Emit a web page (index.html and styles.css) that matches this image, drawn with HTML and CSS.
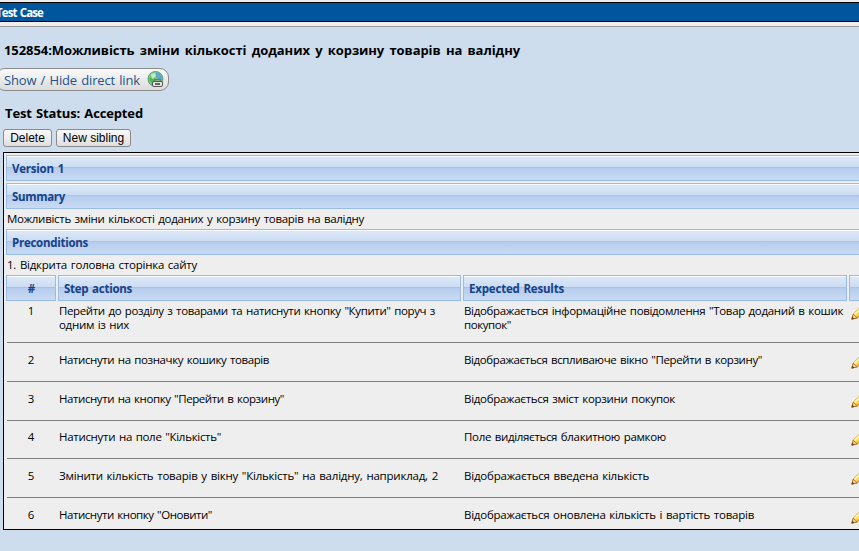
FILE: index.html
```
<!DOCTYPE html>
<html lang="uk">
<head>
<meta charset="utf-8">
<title>Test Case</title>
<link rel="stylesheet" href="styles.css">
</head>
<body>
<svg class="defs" width="0" height="0">
  <symbol id="pencil" viewBox="0 0 16 16">
    <path d="M1 14l1.500-5L10 1.500l4 4L6 13z" fill="#f9d64b" stroke="#b77b16"/>
    <path d="M3.500 9.500L10.500 2.500" stroke="#fff5b0" stroke-width="2"/>
    <path d="M6 12.500L13.500 5" stroke="#d99a20"/>
    <path d="M.8 14.200l1.400-5 4 3.600z" fill="#f0cfae" stroke="#a66a20" stroke-width=".8"/>
    <path d="M.5 14.500l.7-2.800 2.200 2z" fill="#6b3d12"/>
  </symbol>
</svg>
<header class="titlebar"><span class="fit t-bar">Test Case</span></header>
<main>
  <h1><span class="fit t-title">152854:Можливість зміни кількості доданих у корзину товарів на валідну</span></h1>
  <a class="direct-link"><span class="fit t-link">Show / Hide direct link</span>
    <svg width="17" height="17" viewBox="0 0 17 17">
      <circle cx="8.500" cy="8" r="7.500" fill="#77cf7c" stroke="#5b9f78"/>
      <path d="M9 1c4 1 7 4 6.500 8l-4-1-3-3z" fill="#5ba9cf"/>
      <path d="M2 7c2-1 4 0 5 2l-1 4c-2-1-4-3-4-6z" fill="#4dbb52"/>
      <path d="M4 3l4-1 1 3-4 3z" fill="#c0edbc"/>
      <path d="M7.500 11V8.500h6V11" fill="none" stroke="#777" stroke-width="1.400"/>
      <rect x="5.500" y="10.500" width="10" height="5" rx="1.500" fill="#e6e6e6" stroke="#555"/>
      <path d="M8 13h5" stroke="#444" stroke-width="1.600"/>
    </svg>
  </a>
  <h2><span class="fit t-status">Test Status: Accepted</span></h2>
  <div class="buttons"><button class="b-delete">Delete</button><button class="b-sibling">New sibling</button></div>
  <section class="panel">
    <div class="bar first"><span class="fit t-version">Version 1</span></div>
    <div class="bar"><span class="fit t-summary">Summary</span></div>
    <p><span class="fit t-desc">Можливість зміни кількості доданих у корзину товарів на валідну</span></p>
    <div class="bar tight"><span class="fit t-pre">Preconditions</span></div>
    <p><span class="fit t-open">1. Відкрита головна сторінка сайту</span></p>
    <div class="grid head">
      <div class="bar num">#</div><div class="bar"><span class="fit t-steps">Step actions</span></div><div class="bar"><span class="fit t-exp">Expected Results</span></div><div class="bar"></div>
    </div>
    <div class="grid row r1"><div class="n">1</div><div><span class="fit s1">Перейти до розділу з товарами та натиснути кнопку "Купити" поруч з</span><br><span class="fit s1b">одним із них</span></div><div><span class="fit e1">Відображається інформаційне повідомлення "Товар доданий в кошик</span><br><span class="fit e1b">покупок"</span></div><svg class="edit"><use href="#pencil"/></svg></div>
    <div class="grid row"><div class="n">2</div><div><span class="fit s2">Натиснути на позначку кошику товарів</span></div><div><span class="fit e2">Відображається вспливаюче вікно "Перейти в корзину"</span></div><svg class="edit"><use href="#pencil"/></svg></div>
    <div class="grid row"><div class="n">3</div><div><span class="fit s3">Натиснути на кнопку "Перейти в корзину"</span></div><div><span class="fit e3">Відображається зміст корзини покупок</span></div><svg class="edit"><use href="#pencil"/></svg></div>
    <div class="grid row r4"><div class="n">4</div><div><span class="fit s4">Натиснути на поле "Кількість"</span></div><div><span class="fit e4">Поле виділяється блакитною рамкою</span></div><svg class="edit"><use href="#pencil"/></svg></div>
    <div class="grid row"><div class="n">5</div><div><span class="fit s5">Змінити кількість товарів у вікну "Кількість" на валідну, наприклад, 2</span></div><div><span class="fit e5">Відображається введена кількість</span></div><svg class="edit"><use href="#pencil"/></svg></div>
    <div class="grid row r6"><div class="n">6</div><div><span class="fit s6">Натиснути кнопку "Оновити"</span></div><div><span class="fit e6">Відображається оновлена кількість і вартість товарів</span></div><svg class="edit"><use href="#pencil"/></svg></div>
  </section>
</main>
<script src="fit.js"></script>
</body>
</html>
```
FILE: styles.css
```
* { box-sizing: border-box; }
html, body { margin: 0; height: 100%; overflow: hidden; }
body {
  background: #cddded;
  color: #000;
  font: 11.5px/14px "Trebuchet MS", "Open Sans", "Noto Sans", sans-serif;
}
.defs { display: block; height: 0; }
.fit { display: inline-block; white-space: nowrap; width: var(--w); word-spacing: 1px; }
h1, h2, p { margin: 0; }

.titlebar {
  height: 27px;
  border-top: 2px solid #eee;
  border-bottom: 1px solid #999;
  background: linear-gradient(#000 1px, #00569c 1px, #00569c 19px, #000 19px, #000 20px, #eee 20px);
  color: #fff;
  font-weight: bold;
  line-height: 21px;
}
.t-bar { --w: 47px; margin-left: -4px; }
main { padding-left: 3px; }
h1 { margin-top: 14px; padding-left: 1px; height: 20px; font-size: 13px; line-height: 19px; }
.t-title { --w: 516px; word-spacing: 2px; }
.direct-link {
  display: flex;
  align-items: center;
  width: 173px;
  height: 23px;
  margin: 7px 0 0 -7px;
  padding: 0 4px 0 7px;
  justify-content: space-between;
  border: 1px solid #8b8b8b;
  border-radius: 9px;
  background: linear-gradient(#fafafa, #dcdcdc);
  color: #1d5490;
  font-size: 13px;
}
.t-link { --w: 136px; }
h2 { margin-top: 13px; padding-left: 2px; height: 20px; font-size: 13px; line-height: 19px; }
.t-status { --w: 138px; }
.buttons { display: flex; gap: 4px; margin-top: 5px; }
button {
  height: 18px;
  padding: 0;
  border: 1px solid #8b8b8b;
  border-radius: 3px;
  background: linear-gradient(#fafafa, #dedede);
  color: #000;
  font: 12px/15px "Liberation Sans", Arial, sans-serif;
}
.b-delete { width: 49px; }
.b-sibling { width: 75px; }

.panel {
  width: 880px;
  height: 378px;
  margin-top: 5px;
  padding: 2px;
  border: 1px solid #000;
  background: #eee;
  overflow: hidden;
}
.bar {
  height: 26px;
  margin-top: 2px;
  padding-left: 5px;
  border: 1px solid #99bbe8;
  background: linear-gradient(#f8fbff 1px, #dbe8f7 1px, #cbdcf3 11px, #a6c3ea 11px, #a6c3ea 12px, #b6ccec 12px, #c9dbf3);
  color: #15428b;
  font-weight: bold;
  line-height: 26px;
}
.bar.first { margin-top: 0; }
.bar.tight { margin-top: 0; }
p { height: 20px; padding: 3px 0 0 1px; }
.t-version { --w: 52px; }
.t-summary { --w: 53px; }
.t-pre { --w: 76px; }
.t-desc { --w: 357px; }
.t-open { --w: 190px; }
.t-steps { --w: 68px; }
.t-exp { --w: 95px; }

.grid { display: grid; grid-template-columns: 50px 403px 384px 30px; column-gap: 2px; }
.head .bar { margin-top: 0; }
.head .num { padding: 0 0 0 1px; text-align: center; }
.row { height: 39px; padding-top: 10px; margin-left: 1px; border-bottom: 1px solid #7f7f7f; }
.row .n { padding-right: 2px; text-align: center; }
.r1 { height: 42px; padding-top: 3px; }
.r4 { height: 38px; padding-top: 9px; }
.r6 { height: 38px; border: 0; }
.edit { width: 16px; height: 16px; margin: 1px 0 0 1px; }
.s1 { --w: 376px; }
.s1b { --w: 70px; }
.s2 { --w: 210px; }
.s3 { --w: 225px; }
.s4 { --w: 162px; }
.s5 { --w: 379px; }
.s6 { --w: 153px; }
.e1 { --w: 379px; }
.e1b { --w: 47px; }
.e2 { --w: 298px; }
.e3 { --w: 211px; }
.e4 { --w: 202px; }
.e5 { --w: 185px; }
.e6 { --w: 290px; }
```
FILE: fit.js
```
document.querySelectorAll('.fit').forEach(function (el) {
  var target = el.getBoundingClientRect().width;
  el.style.width = 'auto';
  var natural = el.getBoundingClientRect().width;
  el.style.letterSpacing = ((target - natural) / el.textContent.length) + 'px';
});
```
